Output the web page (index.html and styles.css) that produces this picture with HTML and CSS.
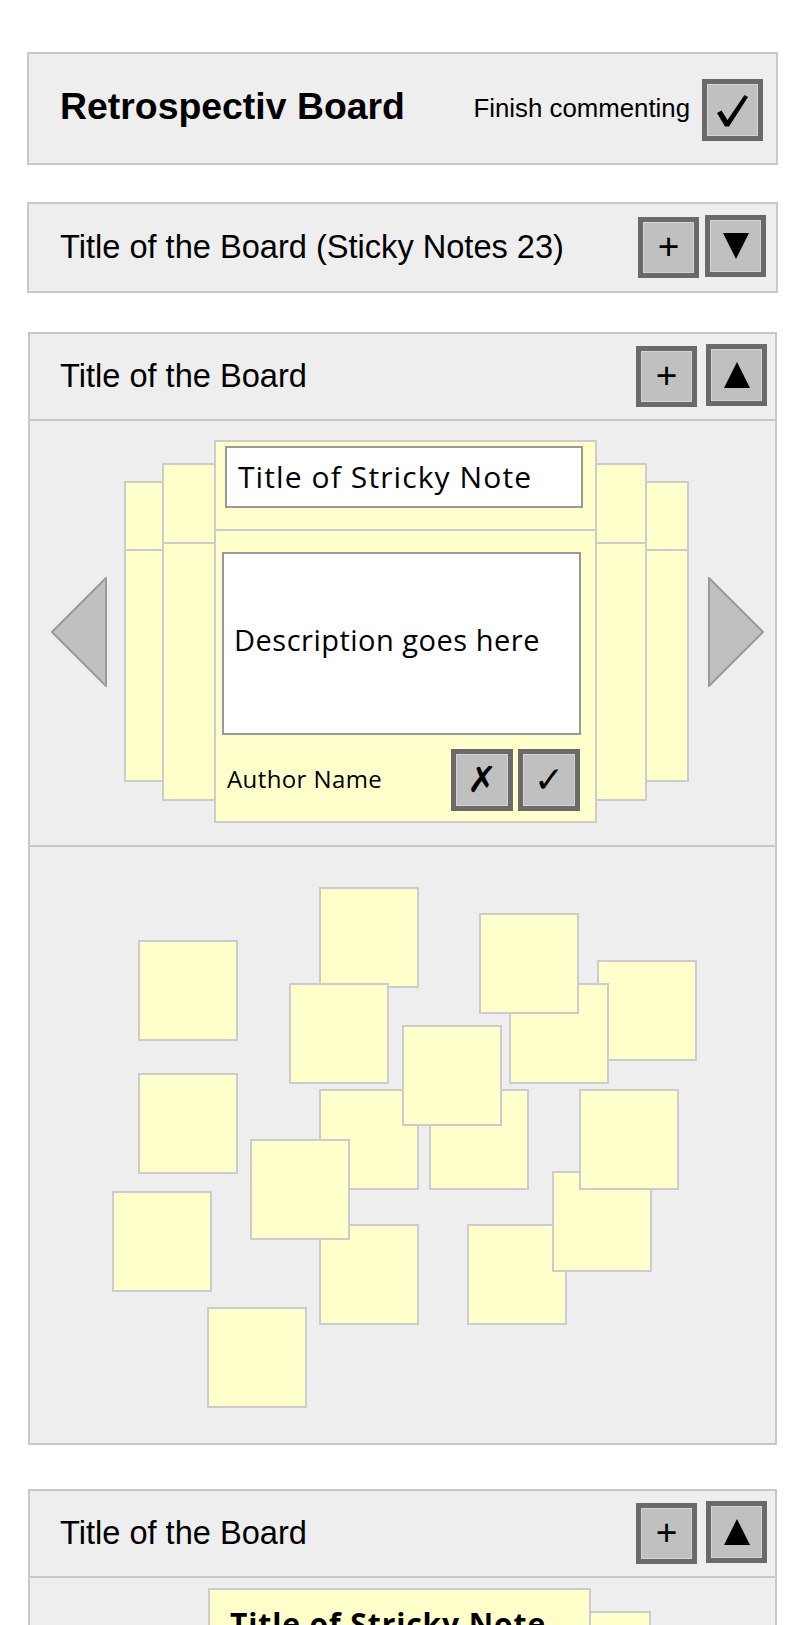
FILE: index.html
```html
<!DOCTYPE html>
<html>
<head>
<meta charset="utf-8">
<title>Retrospectiv Board</title>
<link rel="stylesheet" href="styles.css">
</head>
<body>
<div class="page">
  <header class="panel topbar">
    <h1 class="app-title">Retrospectiv Board</h1>
    <div class="finish">
      <span class="finish-label">Finish commenting</span>
      <span class="btn check-btn"><svg width="31" height="32" viewBox="0 0 31 32"><polygon points="0,18 4.5,15.5 10.5,25 27.5,0 31,2 12,31.5 8,31.5" fill="#000"/></svg></span>
    </div>
  </header>

  <section class="panel board collapsed">
    <div class="board-head">
      <h2 class="board-title">Title of the Board (Sticky Notes 23)</h2>
      <div class="actions">
        <span class="btn plus-btn">+</span>
        <span class="btn tri-btn"><svg width="28" height="28" viewBox="0 0 28 28"><polygon points="1,1 27,1 14,27" fill="#000"/></svg></span>
      </div>
    </div>
  </section>

  <section class="panel board open">
    <div class="board-head">
      <h2 class="board-title">Title of the Board</h2>
      <div class="actions wide">
        <span class="btn plus-btn">+</span>
        <span class="btn tri-btn"><svg width="28" height="28" viewBox="0 0 28 28"><polygon points="14,1 27,27 1,27" fill="#000"/></svg></span>
      </div>
    </div>
    <div class="carousel">
      <svg class="arrow" width="56" height="110" viewBox="0 0 56 110"><polygon points="55,1 1,55 55,109" fill="#c0c0c0" stroke="#9a9a9a" stroke-width="2"/></svg>
      <div class="strip s1"><div class="strip-top"></div></div>
      <div class="strip s2"><div class="strip-top"></div></div>
      <div class="note-card">
        <div class="card-head">
          <div class="title-input">Title of Stricky Note</div>
        </div>
        <div class="card-body">
          <div class="desc-box">Description goes here</div>
          <div class="card-foot">
            <span class="author">Author Name</span>
            <span class="btn card-btn">✗</span>
            <span class="btn card-btn">✓</span>
          </div>
        </div>
      </div>
      <div class="strip s2 r"><div class="strip-top"></div></div>
      <div class="strip s1 r"><div class="strip-top"></div></div>
      <svg class="arrow arrow-r" width="56" height="110" viewBox="0 0 56 110"><polygon points="1,1 55,55 1,109" fill="#c0c0c0" stroke="#9a9a9a" stroke-width="2"/></svg>
    </div>
    <div class="canvas">
      <div class="sticky" style="left:289px;top:40px"></div>
      <div class="sticky" style="left:259px;top:136px"></div>
      <div class="sticky" style="left:108px;top:93px"></div>
      <div class="sticky" style="left:567px;top:113px"></div>
      <div class="sticky" style="left:479px;top:136px"></div>
      <div class="sticky" style="left:449px;top:66px"></div>
      <div class="sticky" style="left:289px;top:242px"></div>
      <div class="sticky" style="left:399px;top:242px"></div>
      <div class="sticky" style="left:372px;top:178px"></div>
      <div class="sticky" style="left:289px;top:377px"></div>
      <div class="sticky" style="left:220px;top:292px"></div>
      <div class="sticky" style="left:108px;top:226px"></div>
      <div class="sticky" style="left:437px;top:377px"></div>
      <div class="sticky" style="left:522px;top:324px"></div>
      <div class="sticky" style="left:549px;top:242px"></div>
      <div class="sticky" style="left:82px;top:344px"></div>
      <div class="sticky" style="left:177px;top:460px"></div>
    </div>
  </section>

  <section class="panel board open last">
    <div class="board-head">
      <h2 class="board-title">Title of the Board</h2>
      <div class="actions wide">
        <span class="btn plus-btn">+</span>
        <span class="btn tri-btn"><svg width="28" height="28" viewBox="0 0 28 28"><polygon points="14,1 27,27 1,27" fill="#000"/></svg></span>
      </div>
    </div>
    <div class="carousel first">
      <div class="note-card">
        <div class="card-head plain">
          <div class="title-plain">Title of Stricky Note</div>
        </div>
        <div class="card-body">
          <div class="desc-box">Description goes here</div>
          <div class="card-foot">
            <span class="author">Author Name</span>
            <span class="btn card-btn">✗</span>
            <span class="btn card-btn">✓</span>
          </div>
        </div>
      </div>
      <div class="strip s2 r"><div class="strip-top"></div></div>
      <div class="strip s1 r"><div class="strip-top"></div></div>
    </div>
  </section>
</div>
</body>
</html>
```

FILE: styles.css
```css
* { box-sizing: border-box; }
body {
  margin: 0;
  background: #fff;
  font-family: "Liberation Sans", Arial, sans-serif;
  color: #000;
}
.page {
  width: 800px;
  padding: 52px 22px 0 27px;
}
.panel {
  border: 2px solid #c8c8c8;
  background: #eeeeee;
}
.btn {
  display: flex;
  align-items: center;
  justify-content: center;
  width: 61px;
  height: 61px;
  border: 5px solid #6a6a6a;
  background: #c0c0c0;
  box-shadow: inset 0 0 0 1px #d4d4d4;
}

/* top bar */
.topbar {
  height: 113px;
  display: flex;
  align-items: center;
  justify-content: space-between;
  padding: 0 13px 0 31px;
}
.app-title {
  margin: 0 0 4px 0;
  font-size: 37.4px;
  font-weight: bold;
  line-height: 1;
}
.finish {
  display: flex;
  align-items: center;
  gap: 12px;
  margin-top: 3px;
}
.finish-label {
  font-size: 25.8px;
  line-height: 1;
  margin-bottom: 3px;
}
.check-btn { height: 62px; padding-top: 2px; }
.check-btn svg { display: block; }

/* boards */
.board { margin-top: 37px; }
.board.open { margin: 39px 1px 0 1px; }
.board.last { margin-top: 44px; }
.board-head {
  height: 87px;
  display: flex;
  align-items: center;
  justify-content: space-between;
  padding: 0 10px 0 31px;
}
.open .board-head {
  padding: 0 8px 0 30px;
  border-bottom: 2px solid #c8c8c8;
}
.board-title {
  margin: 0;
  font-size: 32.6px;
  font-weight: normal;
  line-height: 1;
}
.actions {
  display: flex;
  align-items: center;
  gap: 6px;
}
.actions.wide { gap: 9px; }
.plus-btn {
  font-size: 37px;
  line-height: 1;
  padding-bottom: 3px;
}
.tri-btn { margin-bottom: 3px; height: 62px; }
.tri-btn svg { display: block; }

/* carousel */
.carousel {
  display: flex;
  align-items: center;
  padding: 19px 0 22px 22px;
  border-bottom: 2px solid #c8c8c8;
}
.carousel.first {
  align-items: flex-start;
  padding: 10px 0 0 178px;
  border-bottom: none;
}
.arrow { display: block; flex: none; margin: 0 -1px; }
.arrow-r { margin-left: 19px; }
.strip {
  flex: none;
  background: #ffffcc;
  border: 2px solid #cccccc;
  display: flex;
  flex-direction: column;
}
.strip-top { border-bottom: 2px solid #cccccc; }
.strip.s1 { width: 40px; height: 301px; margin-left: 18px; }
.strip.s1 .strip-top { height: 68px; }
.strip.s2 { width: 54px; height: 338px; margin-left: -2px; }
.strip.s2 .strip-top { height: 79px; }
.strip.s2.r { width: 52px; }
.strip.s1.r { width: 44px; margin-left: -2px; }
.first .strip.s2.r { width: 62px; margin-top: 23px; }
.first .strip.s1.r { margin-top: 43px; }

.note-card {
  flex: none;
  width: 383px;
  height: 383px;
  margin-left: -2px;
  background: #ffffcc;
  border: 2px solid #cccccc;
  font-family: "Open Sans", sans-serif;
  display: flex;
  flex-direction: column;
}
.first .note-card { margin-left: 0; }
.card-head {
  height: 89px;
  padding: 4px 0 0 9px;
  border-bottom: 2px solid #cccccc;
}
.title-input {
  width: 358px;
  height: 62px;
  background: #fff;
  border: 2px solid #999;
  display: flex;
  align-items: center;
  padding: 0 0 2px 11px;
  font-size: 30px;
  letter-spacing: 1.1px;
  white-space: nowrap;
}
.card-head.plain { padding: 13px 0 0 20px; }
.title-plain {
  font-size: 30px;
  font-weight: bold;
  letter-spacing: 0.9px;
  white-space: nowrap;
}
.card-body {
  padding: 21px 0 0 6px;
}
.desc-box {
  width: 359px;
  height: 183px;
  background: #fff;
  border: 2px solid #999;
  display: flex;
  align-items: center;
  padding: 0 0 8px 10px;
  font-size: 29px;
  letter-spacing: 0.5px;
  white-space: nowrap;
}
.card-foot {
  display: flex;
  align-items: center;
  gap: 5px;
  margin-top: 14px;
  padding: 0 15px 0 5px;
}
.author {
  flex: 1;
  font-size: 24px;
  letter-spacing: 0.4px;
  padding-bottom: 3px;
}
.card-btn {
  width: 62px;
  height: 62px;
  font-family: "DejaVu Sans", sans-serif;
  font-size: 36px;
  line-height: 1;
}

/* free canvas */
.canvas {
  position: relative;
  height: 596px;
}
.sticky {
  position: absolute;
  width: 100px;
  height: 101px;
  background: #ffffcc;
  border: 2px solid #cccccc;
}
```
